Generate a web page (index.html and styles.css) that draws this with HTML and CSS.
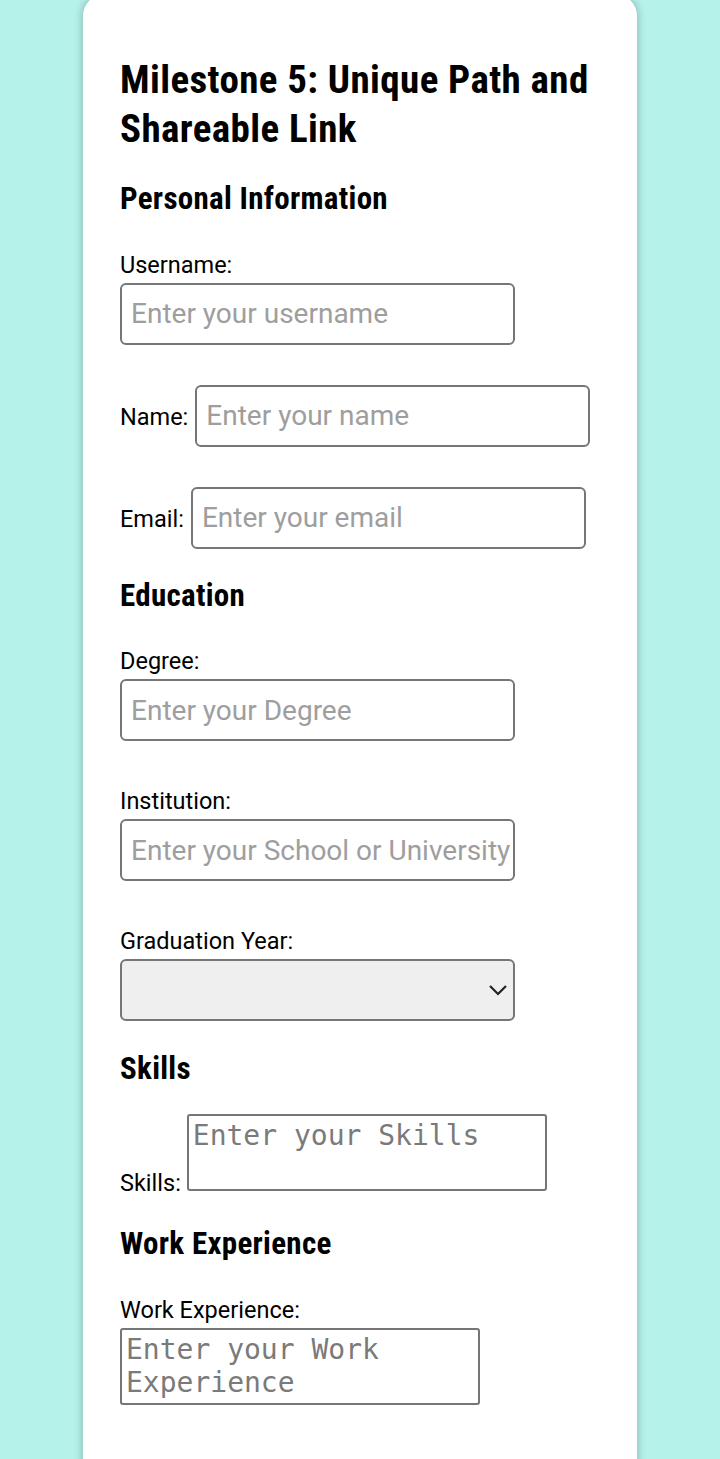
FILE: index.html
```html
<!DOCTYPE html>
<html lang="en">
	<head>
		<meta charset="utf-8" />
		<title>Milestone 5: Unique Path and Shareable Link</title>
		<link rel="stylesheet" href="styles.css">
	</head>
	<body>
		<div class="card">
			<h1 class="titulo">Milestone 5: Unique Path and Shareable Link</h1>

			<h2 class="secao secao1">Personal Information</h2>
			<div class="campo">
				<label class="etik" for="username">Username:</label>
				<input class="caixa" id="username" type="text" placeholder="Enter your username">
			</div>
			<div class="linha">
				<label class="etik" for="name">Name:</label>
				<input class="caixa" id="name" type="text" placeholder="Enter your name">
			</div>
			<div class="linha">
				<label class="etik" for="email">Email:</label>
				<input class="caixa" id="email" type="email" placeholder="Enter your email">
			</div>

			<h2 class="secao">Education</h2>
			<div class="campo">
				<label class="etik" for="degree">Degree:</label>
				<input class="caixa" id="degree" type="text" placeholder="Enter your Degree">
			</div>
			<div class="campo campoSeg">
				<label class="etik" for="institution">Institution:</label>
				<input class="caixa" id="institution" type="text" placeholder="Enter your School or University">
			</div>
			<div class="campo campoSeg">
				<label class="etik" for="year">Graduation Year:</label>
				<div class="selWrap">
					<select class="caixa sel" id="year"></select>
					<svg class="seta" width="20" height="12" viewBox="0 0 20 12"><path d="M2 2 L10 10 L18 2" fill="none" stroke="#222" stroke-width="2.2"/></svg>
				</div>
			</div>

			<h2 class="secao secaoSkills">Skills</h2>
			<div class="linhaTxt">
				<label class="etik" for="skills">Skills:</label>
				<textarea class="area" id="skills" placeholder="Enter your Skills"></textarea>
			</div>

			<h2 class="secao secaoWork">Work Experience</h2>
			<div class="campo">
				<label class="etik" for="work">Work Experience:</label>
				<textarea class="area" id="work" placeholder="Enter your Work Experience"></textarea>
			</div>
		</div>
	</body>
</html>
```

FILE: styles.css
```css
html, body{margin: 0; padding: 0;}
body{background-color: #b5f2ea; font-family: Roboto, "Liberation Sans", sans-serif; color: #000; overflow: hidden;}
.card{width: 554px; margin: -6px 0 0 83px; box-sizing: border-box; padding: 62px 37px 80px 37px; min-height: 1500px; background-color: #fff; border-radius: 22px; box-shadow: 0 0 10px rgba(0,0,0,0.28);}
.titulo{margin: 0; font: bold 39px/49px "Roboto Condensed", Roboto, sans-serif; letter-spacing: 0.4px;}
.secao{margin: 28px 0 0 0; font: bold 31px "Roboto Condensed", Roboto, sans-serif; letter-spacing: 0.3px;}
.secao1{margin-top: 26px;}
.secaoSkills{margin-top: 29px;}
.secaoWork{margin-top: 28.5px;}
.etik{font-size: 23.5px;}
.campo{display: flex; flex-direction: column; align-items: flex-start; gap: 4px; margin-top: 33.5px;}
.campoSeg{margin-top: 46px;}
.linha{display: flex; align-items: baseline; gap: 7px; margin-top: 40px;}
.caixa{width: 395px; height: 62px; box-sizing: border-box; margin: 0; padding: 0 3px 0 9px; font: 28px Roboto, sans-serif; color: #000; background-color: #fff; border: 2px solid #767676; border-radius: 6px;}
.caixa::placeholder{color: #9e9e9e;}
.selWrap{position: relative;}
.sel{appearance: none; -webkit-appearance: none; display: block; background-color: #efefef;}
.seta{position: absolute; right: 7px; top: 25px;}
.linhaTxt{margin-top: 26.5px;}
.linhaTxt .etik{margin-right: 2px;}
.area{width: 360px; height: 77px; box-sizing: border-box; margin: 0; padding: 3px 4px; font: 28px "DejaVu Sans Mono", monospace; color: #000; border: 2px solid #767676; border-radius: 3px; resize: none; overflow: hidden;}
.area::placeholder{color: #7a7a7a;}
```
